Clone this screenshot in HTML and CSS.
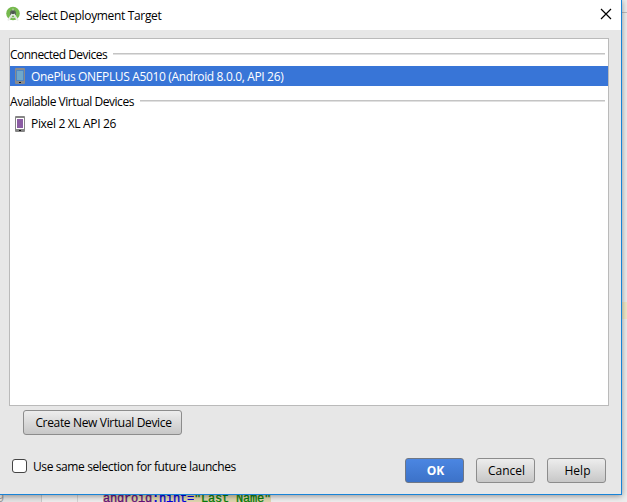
FILE: index.html
```html
<!DOCTYPE html>
<html lang="en">
<head>
<meta charset="utf-8">
<title>Select Deployment Target</title>
<link rel="stylesheet" href="styles.css">
</head>
<body>
<div class="editor">
  <div class="editor-top"></div>
  <div class="editor-mark"></div>
  <div class="code-line"><span class="line-no">9</span><code class="code"><span class="ns">android</span><span class="attr">:hint=</span><span class="str">"Last Name"</span></code></div>
</div>
<main class="dialog">
  <header class="titlebar">
    <svg class="logo" width="16" height="16" viewBox="0 0 16 16">
      <circle cx="8" cy="7.5" r="6.8" fill="#75b94d"/>
      <path d="M5 7a3 3 0 0 1 6 0v2H5z" fill="#5b6b58"/>
      <path d="M7.500 8L3 14.500M8.500 8L13 14.500" stroke="#e9ece9" stroke-width="2"/>
      <path d="M5 11q3 1.500 6 0" stroke="#d5ddd2" fill="none"/>
      <circle cx="8" cy="6.500" r="1.500" fill="#4c5550"/>
      <path d="M8 2.500v2" stroke="#cbd8c4"/>
    </svg>
    <h1 class="title">Select Deployment Target</h1>
    <svg class="close" width="12" height="12" viewBox="0 0 12 12"><path d="M1 1L11 11M11 1L1 11" stroke="#000" stroke-width="1.200"/></svg>
  </header>
  <section class="devices">
    <div class="group"><span class="t-connected">Connected Devices</span><i class="rule"></i></div>
    <div class="device selected">
      <svg width="10" height="16" viewBox="0 0 10 16"><rect width="10" height="16" rx="1" fill="#8b8b8b"/><path d="M1 2h8v11H1z" fill="#4f86c4"/><path d="M2 3h6v9H2z" fill="#6fa8cb"/><path d="M4 14h2v1H4z" fill="#111"/></svg>
      <span class="t-oneplus">OnePlus ONEPLUS A5010 (Android 8.0.0, API 26)</span>
    </div>
    <div class="group second"><span class="t-virtual">Available Virtual Devices</span><i class="rule"></i></div>
    <div class="device">
      <svg class="virtual-icon" width="10" height="16" viewBox="0 0 10 16"><rect width="10" height="16" rx="1" fill="#858585"/><path d="M1 2h8v11H1z" fill="#fff"/><path d="M2 3h6v9H2z" fill="#8b5ca3"/><path d="M4 14h2v1H4z" fill="#111"/></svg>
      <span class="t-pixel">Pixel 2 XL API 26</span>
    </div>
  </section>
  <div class="create-row"><button class="btn create">Create New Virtual Device</button></div>
  <footer class="footer">
    <label class="remember"><span class="box"></span><span class="t-same">Use same selection for future launches</span></label>
    <button class="btn ok">OK</button>
    <button class="btn cancel">Cancel</button>
    <button class="btn help">Help</button>
  </footer>
</main>
</body>
</html>
```
FILE: styles.css
```css
* { box-sizing: border-box; }
body {
  margin: 0;
  width: 627px;
  height: 502px;
  overflow: hidden;
  position: relative;
  background: #e6e6e6;
  font: 12px/16px "Open Sans", "Noto Sans", sans-serif;
  color: #000;
}
.editor {
  position: absolute;
  inset: 0;
  display: flex;
  flex-direction: column;
  background: #ececec;
}
.editor-top { height: 13px; border-bottom: 1px solid #bdbdbd; }
.editor-mark { height: 17px; margin-top: 289px; background: #f0e8c8; }
.code-line {
  margin-top: auto;
  height: 12px;
  display: flex;
  background: linear-gradient(90deg, #e3e3e3 41px, #c8c8c8 41px, #c8c8c8 42px, #ededed 42px, #ededed 77px, #d2d2d2 77px, #d2d2d2 78px, #ededed 78px);
  font: 12px/18px "Liberation Mono", monospace;
}
.line-no { width: 103px; color: #999; margin-left: -3px; }
.code { font: inherit; letter-spacing: -.2px; padding-left: 3px; white-space: pre; -webkit-text-stroke: .3px; }
.ns { color: #660e7a; }
.attr { color: #0000e0; }
.str { color: #087c08; }
.ns, .attr, .str { background: #ddd5ae; }
.dialog {
  position: relative;
  width: 622px;
  height: 495px;
  background: #e7e7e7;
  border: solid #1883d7;
  border-width: 0 1px 1px 0;
  box-shadow: 0 1px 6px rgba(0, 0, 0, .4);
  display: flex;
  flex-direction: column;
}
.titlebar {
  flex: none;
  height: 30px;
  background: #fff;
  display: flex;
  align-items: center;
  padding: 0 9px 2px 5px;
}
.title { margin: 0 auto 0 5px; padding-top: 3px; font: inherit; letter-spacing: -.34px; }
.devices {
  flex: none;
  margin: 8px 12px 0 9px;
  height: 368px;
  background: #fff;
  border: 1px solid #bababa;
  display: flex;
  flex-direction: column;
}
.group { height: 27px; padding: 3px 3px 0 0; display: flex; align-items: center; white-space: nowrap; }
.group.second { height: 28px; padding-top: 2px; }
.group span, .t-oneplus { padding-top: 1px; }
.rule { flex: 1; height: 2px; margin-left: 6px; background: linear-gradient(#c4c4c4 50%, #e0e0e0 50%); }
.device { height: 20px; padding-left: 5px; display: flex; align-items: center; gap: 6px; white-space: nowrap; }
.virtual-icon { margin-top: -1px; }
.selected { background: #3875d7; color: #fff; }
.create-row { display: flex; padding: 4px 0 0 23px; }
.btn {
  height: 25px;
  padding: 0;
  border: 1px solid #8c8c8c;
  border-radius: 3px;
  background: linear-gradient(#ededed, #c7c7c7);
  font: inherit;
  color: #000;
  white-space: nowrap;
}
.create { width: 159px; padding-left: 2px; }
.footer { display: flex; padding: 23px 15px 0 12px; }
.remember { display: flex; margin-right: auto; gap: 6px; white-space: nowrap; }
.box { width: 15px; height: 14px; margin-top: 1px; border: 1px solid #444; border-radius: 3px; background: #fff; }
.t-same { padding-top: 1px; letter-spacing: -.39px; }
.ok { width: 59px; padding-left: 2px; border-color: #6f7785; background: linear-gradient(#4b86e2, #3c72c8); color: #fff; font-weight: bold; }
.cancel { width: 59px; margin: 0 12px; padding-left: 2px; }
.help { width: 59px; padding-left: 2px; }
.t-pixel { letter-spacing: -.33px; }
.t-connected { letter-spacing: -.53px; }
.t-oneplus { letter-spacing: -.35px; }
.t-virtual { letter-spacing: -.46px; }
.create { letter-spacing: -.34px; }
```
